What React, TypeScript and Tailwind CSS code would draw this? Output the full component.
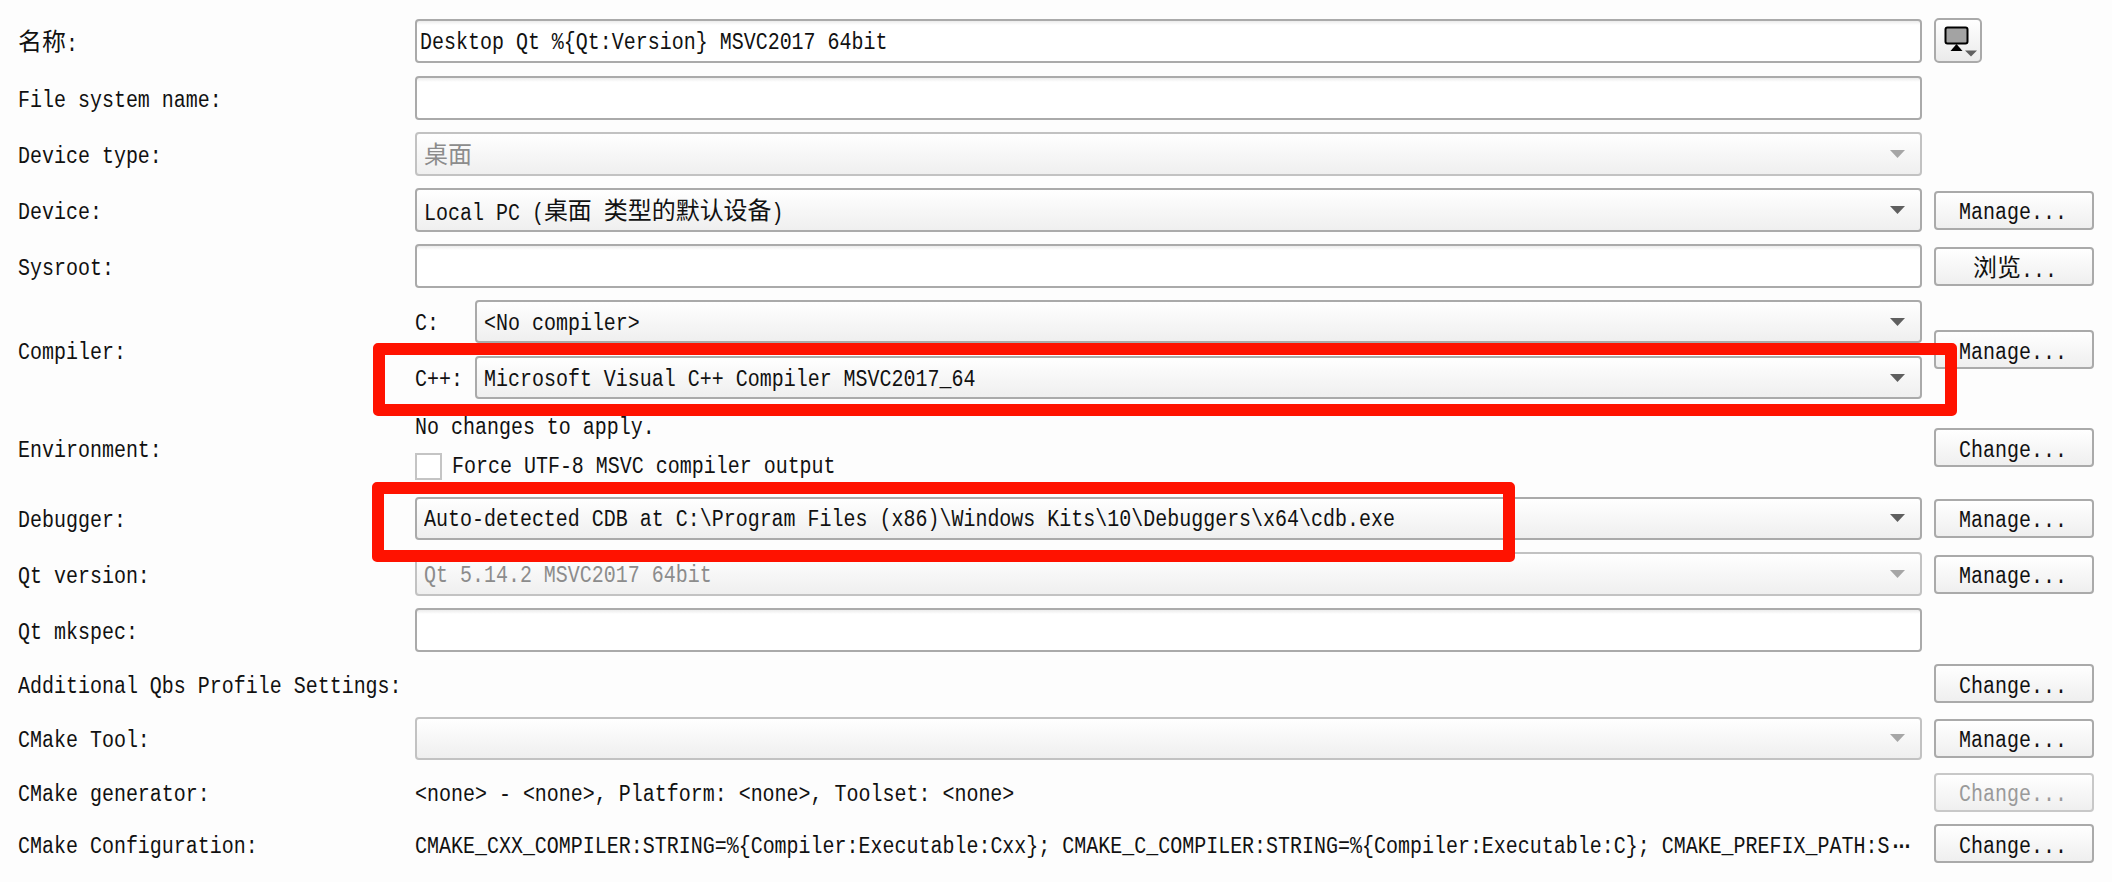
import React from "react";

const Z = ({ children }: { children: React.ReactNode }) => (
  <span className="-my-[5px] inline-block origin-center translate-y-px scale-y-[0.85] font-['Noto_Sans_CJK_SC',sans-serif] text-[28.2px] leading-none">
    {children}
  </span>
);

const T = ({ children }: { children: React.ReactNode }) => (
  <span className="inline-block shrink-0 origin-left scale-x-[0.85] whitespace-nowrap font-['Liberation_Mono','Noto_Sans_CJK_SC',monospace] text-[23.5px] leading-none">
    {children}
  </span>
);

const Label = ({ children }: { children: React.ReactNode }) => (
  <div className="flex w-[385px] shrink-0 items-center pt-[6px] text-[#111]">
    <T>{children}</T>
  </div>
);

const Arrow = ({ off }: { off?: boolean }) => (
  <svg width="15" height="8" viewBox="0 0 15 8" className="absolute right-[15px] top-1/2 -mt-[4px]">
    <path d="M0 0H15L7.500 8Z" fill={off ? "#a6a6a6" : "#5f5f5f"} />
  </svg>
);

const Input = ({ children }: { children?: React.ReactNode }) => (
  <div className="flex h-[44px] w-[1507px] shrink-0 items-center rounded-[4px] border-2 border-[#aaaaaa] bg-gradient-to-b from-[#ececec] from-[0px] to-white to-[4px] pl-[3px] pt-1 text-[#111]">
    {children && <T>{children}</T>}
  </div>
);

const Combo = ({
  children,
  off,
  narrow,
  short,
}: {
  children?: React.ReactNode;
  off?: boolean;
  narrow?: boolean;
  short?: boolean;
}) => (
  <div
    className={
      "relative flex shrink-0 items-center rounded-[4px] border-2 bg-gradient-to-b from-white to-[#efefef] pl-[7px] pt-1 " +
      (narrow ? "w-[1447px] " : "w-[1507px] ") +
      (short ? "h-[43px] " : "h-[44px] ") +
      (off ? "border-[#c2c2c2] text-[#8c8c8c]" : "border-[#aaaaaa] text-[#111]")
    }
  >
    {children && <T>{children}</T>}
    <Arrow off={off} />
  </div>
);

const Btn = ({
  children,
  off,
  pad = "pl-[23px]",
}: {
  children: React.ReactNode;
  off?: boolean;
  pad?: string;
}) => (
  <div
    className={
      "flex h-[39px] w-[160px] shrink-0 items-center rounded-[4px] border-2 bg-gradient-to-b from-white to-[#efefef] pt-[6px] " +
      pad +
      " " +
      (off ? "border-[#c8c8c8] text-[#9a9a9a]" : "border-[#aaaaaa] text-[#111]")
    }
  >
    <T>{children}</T>
  </div>
);

const Row = ({ className, children }: { className: string; children: React.ReactNode }) => (
  <div className={"flex items-center gap-[12px] " + className}>{children}</div>
);

const Plain = ({ children }: { children: React.ReactNode }) => (
  <div className="flex h-[39px] w-[1507px] shrink-0 items-center overflow-hidden pt-[6px] text-[#111]">
    <T>{children}</T>
  </div>
);

export default function App() {
  return (
    <div className="relative h-[882px] w-[2112px] overflow-hidden bg-[#fdfdfd] pl-[18px] pt-[18px]">
      <Row className="h-[45px]">
        <Label>
          <Z>名称</Z>:
        </Label>
        <Input>Desktop Qt %{"{"}Qt:Version{"}"} MSVC2017 64bit</Input>
        <div className="flex h-[45px] w-[48px] items-center justify-center rounded-[5px] border-2 border-[#aaaaaa] bg-gradient-to-b from-white to-[#eaeaea]">
          <svg width="48" height="45" viewBox="0 0 48 45" className="shrink-0">
            <rect x="11.500" y="9.500" width="22" height="16" rx="2" fill="#a3a3a3" stroke="#000" strokeWidth="2" />
            <path d="M22.500 26L28.500 33H16.500Z" fill="#000" />
            <path d="M31 32.500H43L37 38.500Z" fill="#5f5f5f" />
          </svg>
        </div>
      </Row>
      <Row className="mt-[13px] h-[44px]">
        <Label>File system name:</Label>
        <Input />
      </Row>
      <Row className="mt-[12px] h-[44px]">
        <Label>Device type:</Label>
        <Combo off>
          <Z>桌面</Z>
        </Combo>
      </Row>
      <Row className="mt-[12px] h-[44px]">
        <Label>Device:</Label>
        <Combo>
          Local PC (<Z>桌面</Z> <Z>类型的默认设备</Z>)
        </Combo>
        <Btn>Manage...</Btn>
      </Row>
      <Row className="mt-[12px] h-[44px]">
        <Label>Sysroot:</Label>
        <Input />
        <Btn pad="pl-[37px]">
          <Z>浏览</Z>...
        </Btn>
      </Row>
      <Row className="mt-[12px] h-[99px]">
        <Label>Compiler:</Label>
        <div className="flex w-[1507px] shrink-0 flex-col gap-[13px]">
          <div className="flex items-center justify-between text-[#111]">
            <div className="pt-1">
              <T>C:</T>
            </div>
            <Combo narrow short>
              &lt;No compiler&gt;
            </Combo>
          </div>
          <div className="flex items-center justify-between text-[#111]">
            <div className="pt-1">
              <T>C++:</T>
            </div>
            <Combo narrow short>
              Microsoft Visual C++ Compiler MSVC2017_64
            </Combo>
          </div>
        </div>
        <Btn>Manage...</Btn>
      </Row>
      <Row className="mt-[15px] h-[67px]">
        <Label>Environment:</Label>
        <div className="flex w-[1507px] shrink-0 flex-col gap-[13px] text-[#111]">
          <div className="h-[25px]">
            <T>No changes to apply.</T>
          </div>
          <div className="flex h-[26px] items-center gap-[10px]">
            <div className="h-[27px] w-[27px] shrink-0 border-2 border-[#c4c4c4] bg-white" />
            <T>Force UTF-8 MSVC compiler output</T>
          </div>
        </div>
        <Btn>Change...</Btn>
      </Row>
      <Row className="mt-[16px] h-[42px]">
        <Label>Debugger:</Label>
        <Combo short>Auto-detected CDB at C:\Program Files (x86)\Windows Kits\10\Debuggers\x64\cdb.exe</Combo>
        <Btn>Manage...</Btn>
      </Row>
      <Row className="mt-[13px] h-[44px]">
        <Label>Qt version:</Label>
        <Combo off>Qt 5.14.2 MSVC2017 64bit</Combo>
        <Btn>Manage...</Btn>
      </Row>
      <Row className="mt-[12px] h-[44px]">
        <Label>Qt mkspec:</Label>
        <Input />
      </Row>
      <Row className="mt-[12px] h-[39px]">
        <Label>Additional Qbs Profile Settings:</Label>
        <div className="w-[1507px] shrink-0" />
        <Btn>Change...</Btn>
      </Row>
      <Row className="mt-[14px] h-[42px]">
        <Label>CMake Tool:</Label>
        <Combo off short />
        <Btn>Manage...</Btn>
      </Row>
      <Row className="mt-[13px] h-[40px]">
        <Label>CMake generator:</Label>
        <Plain>&lt;none&gt; - &lt;none&gt;, Platform: &lt;none&gt;, Toolset: &lt;none&gt;</Plain>
        <Btn off>Change...</Btn>
      </Row>
      <Row className="mt-[12px] h-[39px]">
        <Label>CMake Configuration:</Label>
        <Plain>
          CMAKE_CXX_COMPILER:STRING=%{"{"}Compiler:Executable:Cxx{"}"}; CMAKE_C_COMPILER:STRING=%{"{"}Compiler:Executable:C{"}"}; CMAKE_PREFIX_PATH:S<span className="font-bold tracking-[-7px]">···</span>
        </Plain>
        <Btn>Change...</Btn>
      </Row>

      <div className="absolute left-[373px] top-[343px] h-[73px] w-[1584px] rounded-[5px] border-[12px] border-[#ff1200]" />
      <div className="absolute left-[372px] top-[482px] h-[80px] w-[1143px] rounded-[5px] border-[12px] border-[#ff1200]" />
    </div>
  );
}
